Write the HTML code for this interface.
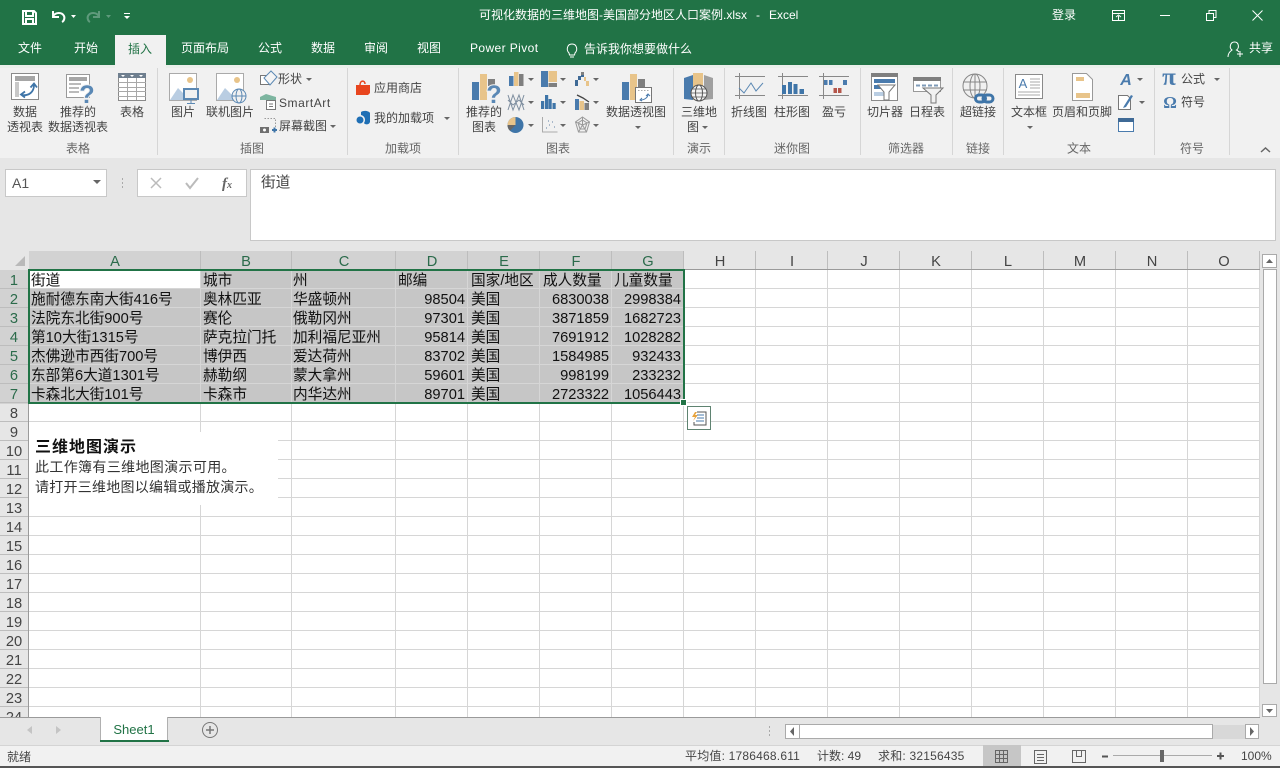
<!DOCTYPE html>
<html lang="zh-CN"><head><meta charset="utf-8"><title>Excel</title>
<style>
html,body{margin:0;padding:0;width:1280px;height:768px;overflow:hidden;background:#e6e6e6}
svg{display:block;position:absolute;left:0;top:0}
text{font-family:"Liberation Sans","Noto Sans CJK SC",sans-serif;font-size:12px;fill:#444}
.w text{fill:#fff}
.r text{fill:#444;text-anchor:middle}
.g text{fill:#666;text-anchor:middle}
.c text{font-size:14.67px;fill:#111}
.n text{font-size:14.67px;fill:#111;text-anchor:end}
.h text{font-size:14.67px;text-anchor:middle;fill:#444}
.hs text{font-size:14.67px;text-anchor:middle;fill:#2b6b4b}
</style></head><body>
<svg width="1280" height="768" viewBox="0 0 1280 768" xmlns="http://www.w3.org/2000/svg">
<defs><path id="a" d="M0 0h6l-3 3z" fill="#666"/></defs>
<!-- title -->
<rect width="1280" height="65" fill="#217346"/>
<rect x="115" y="35" width="51" height="31" fill="#f1f1f1"/>
<rect y="65" width="1280" height="93" fill="#f1f1f1"/>
<rect y="65" x="0" width="115" height="3" fill="#e9efea"/><rect y="65" x="166" width="1114" height="3" fill="#e9efea"/>
<path d="M23 11h11l2 2v11H23z M26 11v5h7v-5 M26 24v-5h7v5" fill="none" stroke="#fff" stroke-width="2"/>
<path d="M53 11v6h6 M53 16c3-4 9-4 11 0 1 2 0 5-2 6" fill="none" stroke="#fff" stroke-width="2"/>
<path d="M71 15h5l-2.500 3z" fill="#fff"/>
<path d="M99 11v6h-6 M99 16c-3-4-9-4-11 0-1 2 0 5 2 6" fill="none" stroke="#5f9a7c" stroke-width="2"/>
<path d="M106 15h5l-2.500 3z" fill="#5f9a7c"/>
<path d="M124 13h6v1h-6z M124 16h6l-3 3z" fill="#fff"/>
<g class="w">
<text x="479" y="19">可视化数据的三维地图-美国部分地区人口案例.xlsx</text>
<text x="756" y="19">-</text>
<text x="769" y="19">Excel</text>
<text x="1052" y="19">登录</text>
<text x="18" y="52">文件</text><text x="74" y="52">开始</text>
<text x="181" y="52">页面布局</text><text x="258" y="52">公式</text><text x="311" y="52">数据</text><text x="364" y="52">审阅</text><text x="417" y="52">视图</text>
<text x="470" y="52" style="letter-spacing:.4px">Power Pivot</text>
<text x="584" y="53">告诉我你想要做什么</text>
<text x="1249" y="52">共享</text>
</g>
<text x="128" y="53" style="fill:#217346">插入</text>
<path d="M1112.500 10.500h12v10h-12z M1112 13.500h13 M1118.500 20v-4 M1116 17l2.500-2 2.500 2" fill="none" stroke="#fff"/>
<path d="M1160 15.500h10" stroke="#fff"/>
<path d="M1206.500 13.500h7v7h-7z M1209 13v-2.500h7v7h-2.500" fill="none" stroke="#fff"/>
<path d="M1252.500 10.500l10 10 M1262.500 10.500l-10 10" stroke="#fff" fill="none"/>
<path d="M569 53c-3-3-2-9 3-9s6 6 3 9l-.5 2h-5z M570 57h4" fill="none" stroke="#fff"/>
<path d="M1228 57c0-5 3-6 4-7-3-2-2-8 2.500-8s5 6 2 8c1 .5 2 1 2.500 2 M1237 54h6 M1240 51v6" fill="none" stroke="#fff"/>
<!-- separators -->
<path d="M157.500 68v87M347.500 68v87M458.500 68v87M673.500 68v87M724.500 68v87M860.500 68v87M952.500 68v87M1003.500 68v87M1154.500 68v87M1229.500 68v87" stroke="#d6d6d6"/>
<!-- ribbon labels -->
<g class="r">
<text x="25" y="116">数据</text><text x="25" y="131">透视表</text>
<text x="78" y="116">推荐的</text><text x="78" y="131">数据透视表</text>
<text x="132" y="116">表格</text><text x="183" y="116">图片</text><text x="230" y="116">联机图片</text>
<text x="484" y="116">推荐的</text><text x="484" y="131">图表</text>
<text x="636" y="116">数据透视图</text>
<text x="699" y="116">三维地</text><text x="693" y="131">图</text>
<text x="749" y="116">折线图</text><text x="792" y="116">柱形图</text><text x="834" y="116">盈亏</text>
<text x="885" y="116">切片器</text><text x="927" y="116">日程表</text><text x="978" y="116">超链接</text>
<text x="1029" y="116">文本框</text><text x="1082" y="116">页眉和页脚</text>
</g>
<text x="278" y="83">形状</text><text x="279" y="107" style="letter-spacing:.55px">SmartArt</text><text x="279" y="130">屏幕截图</text>
<text x="374" y="92">应用商店</text><text x="374" y="122">我的加载项</text>
<text x="1181" y="83">公式</text><text x="1181" y="106">符号</text>
<g class="g">
<text x="78" y="152.500">表格</text><text x="252" y="152.500">插图</text><text x="403" y="152.500">加载项</text><text x="558" y="152.500">图表</text><text x="699" y="152.500">演示</text><text x="792" y="152.500">迷你图</text><text x="906" y="152.500">筛选器</text><text x="978" y="152.500">链接</text><text x="1079" y="152.500">文本</text><text x="1192" y="152.500">符号</text>
</g>
<!-- arrows -->
<use href="#a" x="306" y="78"/><use href="#a" x="330" y="125"/><use href="#a" x="444" y="117"/>
<use href="#a" x="528" y="78"/><use href="#a" x="560" y="78"/><use href="#a" x="593" y="78"/>
<use href="#a" x="528" y="101"/><use href="#a" x="560" y="101"/><use href="#a" x="593" y="101"/>
<use href="#a" x="528" y="124"/><use href="#a" x="560" y="124"/><use href="#a" x="593" y="124"/>
<use href="#a" x="635" y="126"/><use href="#a" x="702" y="126"/><use href="#a" x="1027" y="126"/>
<use href="#a" x="1137" y="78"/><use href="#a" x="1139" y="101"/><use href="#a" x="1214" y="78"/>
<!-- pivot table -->
<rect x="11.500" y="73.500" width="27" height="26" fill="#fff" stroke="#8a8a8a"/><rect x="15" y="76" width="20" height="5" fill="#a6a6a6"/><rect x="15" y="82" width="4" height="15" fill="#c8c8c8"/>
<path d="M22 95c7 1 12-3 12-10 M30.500 87.500l3.500-4 3 4 M25 91.500l-4 3 4 3" fill="none" stroke="#3f75a8" stroke-width="1.800"/>
<!-- recommended pivot -->
<rect x="66.500" y="74.500" width="23" height="23" fill="#fff" stroke="#999"/><rect x="69" y="77" width="18" height="4" fill="#a6a6a6"/><path d="M69 84h12M69 88h10M69 92h10" stroke="#bbb" stroke-width="2"/>
<text x="87" y="103" style="font-size:25px;font-weight:bold;fill:#5a88b5;text-anchor:middle;paint-order:stroke;stroke:#f1f1f1;stroke-width:2px">?</text>
<!-- table -->
<rect x="118.500" y="73.500" width="27" height="27" fill="#fff" stroke="#8a8a8a"/><rect x="118" y="73" width="28" height="5" fill="#6f7f8f"/>
<path d="M121 75h4l-2 2zM130 75h4l-2 2zM139 75h4l-2 2z" fill="#fff"/>
<path d="M118 82.500h28M118 87.500h28M118 91.500h28M118 96.500h28M127.500 78v22M136.500 78v22" stroke="#a8a8a8"/>
<!-- picture -->
<rect x="169.500" y="73.500" width="27" height="27" fill="#fff" stroke="#aaa"/><circle cx="190" cy="80" r="3" fill="#e8c48a"/><path d="M170 100l8-12 7 7 2 5z" fill="#b9cde2"/>
<rect x="184" y="89" width="14" height="10" fill="#f1f1f1" stroke="#5b88b3" stroke-width="2"/><path d="M191 100v3M187 103.500h8" stroke="#5b88b3"/>
<!-- online picture -->
<rect x="216.500" y="73.500" width="27" height="27" fill="#fff" stroke="#aaa"/><circle cx="237" cy="80" r="3" fill="#e8c48a"/><path d="M217 100l8-12 7 7 2 5z" fill="#b9cde2"/>
<circle cx="239" cy="96" r="7" fill="#f1f1f1" stroke="#5b88b3"/><ellipse cx="239" cy="96" rx="3" ry="7" fill="none" stroke="#5b88b3"/><path d="M232 96h14" stroke="#5b88b3"/>
<!-- shapes -->
<rect x="260.500" y="75.500" width="9" height="9" fill="#fff" stroke="#777"/><path d="M271 71l6 6-7 8-6-7z" fill="#f4f4f4" stroke="#5b88b3"/>
<path d="M260 97l6-3 10 3v3h-16z" fill="#7db5a0"/><rect x="266.500" y="100.500" width="9" height="9" fill="#fff" stroke="#777"/><path d="M269 104h4M269 106.500h4" stroke="#777"/>
<path d="M264.500 118.500h11v9" fill="none" stroke="#999" stroke-dasharray="1.500 1.500"/><rect x="260" y="127" width="9" height="6" fill="#6f6f6f"/><circle cx="264.500" cy="130" r="1.500" fill="#fff"/><path d="M272 130h5M274.500 127.500v5" stroke="#3f75a8" stroke-width="2"/>
<!-- store & addin -->
<path d="M356 85h14v8l-2 2h-12z" fill="#e8451e"/><path d="M360 85c0-5 5-5 5-1" fill="none" stroke="#e8451e" stroke-width="1.500"/>
<circle cx="360" cy="120" r="3.500" fill="#1f6fb5"/><path d="M361 112c3-2 8-1 9 1v9c-1 3-5 3-6 1 2-3 1-7-3-8z" fill="#1f6fb5"/>
<!-- recommended charts -->
<rect x="472" y="82" width="7" height="18" fill="#4a7bad"/><rect x="480" y="74" width="7" height="26" fill="#e8c48a"/><rect x="488" y="79" width="7" height="7" fill="#7f7f7f"/>
<text x="494" y="103" style="font-size:25px;font-weight:bold;fill:#5a88b5;text-anchor:middle;paint-order:stroke;stroke:#f1f1f1;stroke-width:2px">?</text>
<!-- small charts -->
<rect x="509" y="76" width="4.500" height="10" fill="#4a7bad"/><rect x="514" y="72" width="4.500" height="14" fill="#e8c48a"/><rect x="519" y="74" width="4.500" height="12" fill="#7f7f7f"/>
<rect x="541" y="71" width="7" height="16" fill="#4a7bad"/><rect x="548.500" y="71" width="8.500" height="11" fill="#e8c48a"/><rect x="548.500" y="83" width="8.500" height="4" fill="#7f7f7f"/>
<path d="M575 86v-6h3v-4h3v-4h3v5h-3v3h-3v6z" fill="#3f6a96"/><path d="M584 77h2v4h3v5h-3v-5h-2z" fill="#e8c48a"/><rect x="581" y="72" width="3" height="3" fill="#7f7f7f"/>
<path d="M508 95l5 15 6-15 5 15M508 110l5-15 6 15 5-15M508 100l5 5 6-5 5 5" fill="none" stroke="#7f8fa0"/>
<rect x="541" y="101" width="3.200" height="8" fill="#3f75a8"/><rect x="545" y="95" width="3.200" height="14" fill="#3f75a8"/><rect x="548.500" y="99" width="3.200" height="10" fill="#3f75a8"/><rect x="552.500" y="103" width="3.200" height="6" fill="#3f75a8"/>
<rect x="575" y="99" width="4" height="11" fill="#4a7bad"/><rect x="579.500" y="101" width="4.500" height="9" fill="#e8c48a"/><rect x="584.500" y="103" width="4.500" height="7" fill="#7f7f7f"/><path d="M577 95l6 3 6 4" stroke="#444" fill="none" stroke-width="1.300"/>
<circle cx="515.500" cy="125" r="8" fill="#3f75a8"/><path d="M515.500 125v-8a8 8 0 0 0-8 8z" fill="#e8c48a"/><path d="M515.500 125h-8a8 8 0 0 0 2.500 5.800z" fill="#666"/>
<path d="M542.500 117v15h15" fill="none" stroke="#aaa"/><path d="M546 128h1M549 125h1M552 122h1M548 121h1M554 127h1" stroke="#8fa6bd" stroke-width="1.500"/>
<path d="M582.500 117l7 5-3 10h-8l-3-10z M582.500 117v8M589.500 122l-7 3M586.500 132l-4-7M578.500 132l4-7M575.500 122l7 3 M582.500 120l4.500 3-2 6h-5l-2-6z" fill="none" stroke="#999"/>
<!-- pivot chart -->
<rect x="622" y="82" width="7" height="18" fill="#4a7bad"/><rect x="630" y="74" width="7" height="26" fill="#e8c48a"/><rect x="638" y="79" width="7" height="8" fill="#7f7f7f"/>
<rect x="635.500" y="87.500" width="16" height="15" fill="#fff" stroke="#777"/><path d="M638 90.500h11" stroke="#aaa" stroke-dasharray="1.500 1.500"/><path d="M640 100c4 0 8-2 8-6M646 96l2-2 2 2M642 98l-2 2 2 1" fill="none" stroke="#4a7bad"/>
<!-- 3d map -->
<path d="M684 78l9-3v25l-9-1z" fill="#4a7bad"/><path d="M693 73h10v27h-10z" fill="#e8c48a"/><path d="M704 75l9 3v21l-9 1z" fill="#a0a0a0"/>
<circle cx="699" cy="93" r="8" fill="#f4f4f4" stroke="#555"/><ellipse cx="699" cy="93" rx="3.500" ry="8" fill="none" stroke="#555"/><path d="M691 93h16M692 89h14M692 97h14" stroke="#555" stroke-width=".8"/>
<!-- sparklines -->
<path d="M735 76.500h30M735 95.500h30M739.500 73v26M778 76.500h30M778 95.500h30M782.500 73v26M819 76.500h30M819 95.500h30M823.500 73v26" stroke="#888" fill="none"/>
<path d="M739 88l5 5 7-10 5 8 7-8" fill="none" stroke="#5b88b3"/>
<rect x="782" y="85" width="4" height="9" fill="#3f75a8"/><rect x="788" y="82" width="4" height="12" fill="#3f75a8"/><rect x="793.500" y="84" width="4" height="10" fill="#3f75a8"/><rect x="799.500" y="89" width="4.500" height="5" fill="#3f75a8"/>
<rect x="824" y="80" width="3.500" height="5" fill="#4a7bad"/><rect x="829" y="80" width="3.500" height="5" fill="#4a7bad"/><rect x="833.500" y="88" width="3.500" height="5" fill="#b5564a"/><rect x="838" y="88" width="3.500" height="5" fill="#b5564a"/><rect x="843" y="80" width="4" height="5" fill="#4a7bad"/>
<!-- slicer -->
<rect x="871.500" y="74.500" width="26" height="26" fill="#fff" stroke="#8a8a8a"/><rect x="871" y="73" width="27" height="4" fill="#7f7f7f"/><rect x="874" y="79" width="21" height="4" fill="#4a7bad"/><rect x="874" y="85" width="10" height="4" fill="#4a7bad"/><rect x="874" y="92" width="11" height="4" fill="#b9cde2"/>
<path d="M878 85h17l-6 7v8h-5v-8z" fill="#fff" stroke="#777"/>
<!-- timeline -->
<rect x="913.500" y="77.500" width="27" height="14" fill="#fff" stroke="#999"/><rect x="913" y="77" width="28" height="4" fill="#7f7f7f"/><path d="M916 85.500h4M922 85.500h4M928 85.500h4M934 85.500h4" stroke="#7f9bb8" stroke-width="2"/>
<path d="M923 88h20l-7 7v8h-5v-8z" fill="#f1f1f1" stroke="#777"/>
<!-- hyperlink -->
<circle cx="975" cy="86" r="12" fill="none" stroke="#888"/><ellipse cx="975" cy="86" rx="5" ry="12" fill="none" stroke="#888"/><path d="M963 82h24M963 90h24M975 74v24" stroke="#888"/>
<rect x="975.500" y="95" width="10" height="7" rx="3.500" fill="#f1f1f1" stroke="#3f75a8" stroke-width="3"/><rect x="983" y="95" width="10" height="7" rx="3.500" fill="none" stroke="#3f75a8" stroke-width="3"/>
<!-- textbox -->
<rect x="1015.500" y="74.500" width="27" height="24" fill="#fff" stroke="#8a8a8a"/><text x="1023" y="88" style="font-size:13px;fill:#4a7bad;text-anchor:middle">A</text><path d="M1030 79h10M1030 82h10M1030 85h10M1030 88h10M1018 92h22M1018 95h22" stroke="#aaa"/>
<!-- header footer -->
<path d="M1072.500 73.500h14l6 6v21h-20z" fill="#fff" stroke="#999"/><rect x="1076" y="77" width="8" height="4" fill="#e8c48a"/><rect x="1076" y="93" width="14" height="5" fill="#e8c48a"/>
<!-- wordart etc -->
<text x="1126" y="85" style="font-size:16px;font-weight:bold;font-style:italic;fill:#4a7bad;text-anchor:middle">A</text>
<path d="M1118.500 95.500h9l3 3v11h-12z" fill="#fff" stroke="#777"/><path d="M1124 106l7-11 2 1-7 11-3 1z" fill="#4a7bad"/>
<rect x="1118.500" y="118.500" width="15" height="13" fill="#fff" stroke="#4a7bad"/><rect x="1118" y="118" width="16" height="4" fill="#3f6a96"/>
<text x="1169" y="85" style="font-size:25px;font-weight:bold;fill:#4a7bad;text-anchor:middle;font-family:'Liberation Serif',serif">π</text>
<text x="1170" y="108" style="font-size:17px;font-weight:bold;fill:#4a7bad;text-anchor:middle;font-family:'Liberation Serif',serif">Ω</text>
<path d="M1261 152l4.500-4 4.500 4" fill="none" stroke="#666" stroke-width="1.500"/>
<!-- formula bar -->
<rect y="158" width="1280" height="93" fill="#e6e6e6"/>
<rect x="5.500" y="169.500" width="101" height="27" fill="#fff" stroke="#c8c8c8"/>
<text x="12" y="188" style="font-size:14px;fill:#555">A1</text><path d="M93 180h8l-4 4z" fill="#666"/>
<path d="M122.500 178v2M122.500 182v2M122.500 186v2" stroke="#aaa"/>
<rect x="137.500" y="169.500" width="109" height="27" fill="#fff" stroke="#c8c8c8"/>
<path d="M151 178l10 10M161 178l-10 10" stroke="#bbb" stroke-width="1.500"/><path d="M186 183l4 5 8-10" fill="none" stroke="#bbb" stroke-width="2"/>
<text x="222" y="188" style="font-size:15px;font-style:italic;font-weight:bold;fill:#666;font-family:'Liberation Serif',serif">f<tspan font-size="10">x</tspan></text>
<rect x="250.500" y="169.500" width="1025" height="71" fill="#fff" stroke="#c8c8c8"/>
<text x="261" y="187" style="font-size:14.67px">街道</text>
<!-- sheet -->
<rect x="29" y="270" width="1231" height="447" fill="#fff"/>
<rect x="0" y="251" width="1260" height="18" fill="#e6e6e6"/><rect x="29" y="251" width="655" height="18" fill="#d2d2d2"/>
<rect x="0" y="270" width="28" height="134" fill="#d2d2d2"/>
<path d="M25 256v10h-10z" fill="#b9b9b9"/>
<rect x="29" y="270" width="655" height="133" fill="#c6c6c6"/><rect x="30" y="271" width="170" height="18" fill="#fff"/>
<path d="M200.500 270v447M291.500 270v447M395.500 270v447M467.500 270v447M539.500 270v447M611.500 270v447M683.500 270v447M755.500 270v447M827.500 270v447M899.500 270v447M971.500 270v447M1043.500 270v447M1115.500 270v447M1187.500 270v447M1259.500 270v447M29 288.500h1231M29 307.500h1231M29 326.500h1231M29 345.500h1231M29 364.500h1231M29 383.500h1231M29 402.500h1231M29 421.500h1231M29 440.500h1231M29 459.500h1231M29 478.500h1231M29 497.500h1231M29 516.500h1231M29 535.500h1231M29 554.500h1231M29 573.500h1231M29 592.500h1231M29 611.500h1231M29 630.500h1231M29 649.500h1231M29 668.500h1231M29 687.500h1231M29 706.500h1231" stroke="#d6d6d6"/>
<path d="M200.500 251v18M291.500 251v18M395.500 251v18M467.500 251v18M539.500 251v18M611.500 251v18M683.500 251v18M755.500 251v18M827.500 251v18M899.500 251v18M971.500 251v18M1043.500 251v18M1115.500 251v18M1187.500 251v18M1259.500 251v18M0 288.500h28M0 307.500h28M0 326.500h28M0 345.500h28M0 364.500h28M0 383.500h28M0 402.500h28M0 421.500h28M0 440.500h28M0 459.500h28M0 478.500h28M0 497.500h28M0 516.500h28M0 535.500h28M0 554.500h28M0 573.500h28M0 592.500h28M0 611.500h28M0 630.500h28M0 649.500h28M0 668.500h28M0 687.500h28M0 706.500h28" stroke="#bdbdbd"/>
<path d="M684 269.500h576" stroke="#9a9a9a"/><path d="M28.500 404v313" stroke="#9a9a9a"/>
<g class="hs">
<text x="115" y="266">A</text><text x="246" y="266">B</text><text x="344" y="266">C</text><text x="432" y="266">D</text><text x="504" y="266">E</text><text x="576" y="266">F</text><text x="648" y="266">G</text>
<text x="14" y="285">1</text><text x="14" y="304">2</text><text x="14" y="323">3</text><text x="14" y="342">4</text><text x="14" y="361">5</text><text x="14" y="380">6</text><text x="14" y="399">7</text>
</g>
<g class="h">
<text x="720" y="266">H</text><text x="792" y="266">I</text><text x="864" y="266">J</text><text x="936" y="266">K</text><text x="1008" y="266">L</text><text x="1080" y="266">M</text><text x="1152" y="266">N</text><text x="1224" y="266">O</text>
<text x="14" y="418">8</text><text x="14" y="437">9</text><text x="14" y="456">10</text><text x="14" y="475">11</text><text x="14" y="494">12</text><text x="14" y="513">13</text><text x="14" y="532">14</text><text x="14" y="551">15</text><text x="14" y="570">16</text><text x="14" y="589">17</text><text x="14" y="608">18</text><text x="14" y="627">19</text><text x="14" y="646">20</text><text x="14" y="665">21</text><text x="14" y="684">22</text><text x="14" y="703">23</text><text x="14" y="722">24</text>
</g>
<g class="c">
<text x="31" y="285">街道</text><text x="203" y="285">城市</text><text x="293" y="285">州</text><text x="398" y="285">邮编</text><text x="471" y="285">国家/地区</text><text x="543" y="285">成人数量</text><text x="614" y="285">儿童数量</text>
<text x="31" y="304">施耐德东南大街416号</text><text x="203" y="304">奥林匹亚</text><text x="293" y="304">华盛顿州</text><text x="471" y="304">美国</text>
<text x="31" y="323">法院东北街900号</text><text x="203" y="323">赛伦</text><text x="293" y="323">俄勒冈州</text><text x="471" y="323">美国</text>
<text x="31" y="342">第10大街1315号</text><text x="203" y="342">萨克拉门托</text><text x="293" y="342">加利福尼亚州</text><text x="471" y="342">美国</text>
<text x="31" y="361">杰佛逊市西街700号</text><text x="203" y="361">博伊西</text><text x="293" y="361">爱达荷州</text><text x="471" y="361">美国</text>
<text x="31" y="380">东部第6大道1301号</text><text x="203" y="380">赫勒纲</text><text x="293" y="380">蒙大拿州</text><text x="471" y="380">美国</text>
<text x="31" y="399">卡森北大街101号</text><text x="203" y="399">卡森市</text><text x="293" y="399">内华达州</text><text x="471" y="399">美国</text>
</g>
<g class="n">
<text x="465" y="304">98504</text><text x="609" y="304">6830038</text><text x="681" y="304">2998384</text>
<text x="465" y="323">97301</text><text x="609" y="323">3871859</text><text x="681" y="323">1682723</text>
<text x="465" y="342">95814</text><text x="609" y="342">7691912</text><text x="681" y="342">1028282</text>
<text x="465" y="361">83702</text><text x="609" y="361">1584985</text><text x="681" y="361">932433</text>
<text x="465" y="380">59601</text><text x="609" y="380">998199</text><text x="681" y="380">233232</text>
<text x="465" y="399">89701</text><text x="609" y="399">2723322</text><text x="681" y="399">1056443</text>
</g>
<rect x="29" y="270" width="655" height="133" fill="none" stroke="#217346" stroke-width="2"/>
<rect x="680" y="399" width="7" height="7" fill="#fff"/><rect x="681" y="400" width="5" height="5" fill="#217346"/>
<rect x="687.500" y="406.500" width="23" height="23" fill="#fff" stroke="#5f8371"/>
<path d="M695 412l-3 5h3l-2 4 5-6h-3l2-3z" fill="#e8a33d"/><path d="M697 412h9v13h-12v-3" fill="none" stroke="#555"/><path d="M697 415h7M697 418h7M696 421h8" stroke="#4a7bad"/>
<!-- 3D map note -->
<rect x="29" y="432" width="249" height="73" fill="#fff"/>
<text x="35" y="452" style="font-size:16px;font-weight:bold;fill:#111;letter-spacing:1px">三维地图演示</text>
<text x="35" y="472" style="font-size:14px;fill:#333;letter-spacing:.35px">此工作簿有三维地图演示可用。</text>
<text x="35" y="492" style="font-size:14px;fill:#333;letter-spacing:.25px">请打开三维地图以编辑或播放演示。</text>
<!-- v scrollbar -->
<rect x="1260" y="251" width="20" height="466" fill="#e6e6e6"/>
<rect x="1262.500" y="254.500" width="14" height="13" fill="#fff" stroke="#aaa"/><path d="M1266 263h7l-3.500-4z" fill="#666"/>
<rect x="1263.500" y="269.500" width="13" height="414" fill="#fff" stroke="#aaa"/>
<rect x="1262.500" y="704.500" width="14" height="12" fill="#fff" stroke="#aaa"/><path d="M1266 709h7l-3.500 4z" fill="#666"/>
<!-- tab bar -->
<rect y="717" width="1280" height="28" fill="#e6e6e6"/>
<path d="M0 717.500h1260" stroke="#9a9a9a"/>
<path d="M32 726v8l-5-4zM56 726v8l5-4z" fill="#c4c4c4"/>
<rect x="100" y="717" width="68" height="25" fill="#fff"/><path d="M100.500 717v25M167.500 717v25" stroke="#b0b0b0"/><rect x="100" y="740" width="69" height="2" fill="#217346"/>
<text x="134" y="734" style="font-size:13px;fill:#217346;text-anchor:middle">Sheet1</text>
<circle cx="210" cy="730" r="7.500" fill="none" stroke="#777"/><path d="M206 730h8M210 726v8" stroke="#777" stroke-width="1.500"/>
<path d="M769.500 726v2M769.500 730v2M769.500 734v2" stroke="#aaa"/>
<rect x="1212" y="725" width="33" height="14" fill="#d8d8d8"/>
<rect x="785.500" y="724.500" width="14" height="14" fill="#fff" stroke="#aaa"/><path d="M794 727v9l-4-4.500z" fill="#666"/>
<rect x="799.500" y="724.500" width="413" height="14" fill="#fff" stroke="#aaa"/>
<rect x="1245.500" y="724.500" width="13" height="14" fill="#fff" stroke="#aaa"/><path d="M1250 727v9l4-4.500z" fill="#666"/>
<!-- status bar -->
<rect y="745" width="1280" height="21" fill="#f1f1f1"/><path d="M0 745.500h1280" stroke="#d4d4d4"/>
<rect y="766" width="1280" height="2" fill="#555"/>
<text x="7" y="761">就绪</text>
<text x="685" y="760" style="letter-spacing:.2px">平均值: 1786468.611</text><text x="817" y="760">计数: 49</text><text x="878" y="760" style="letter-spacing:.2px">求和: 32156435</text>
<rect x="983" y="745" width="38" height="21" fill="#c6c6c6"/>
<path d="M995.500 750.500h12v12h-12zM999.500 750.500v12M1003.500 750.500v12M995.500 754.500h12M995.500 758.500h12" fill="none" stroke="#666"/>
<path d="M1034.500 750.500h12v13h-12zM1037 754.500h7M1037 757.500h7M1037 760.500h7" fill="none" stroke="#666"/>
<path d="M1072.500 750.500h13v12h-13zM1076.500 750.500v6h5v-6" fill="none" stroke="#666"/>
<path d="M1102 756.500h6" stroke="#555" stroke-width="2"/><path d="M1113 755.500h99" stroke="#aaa"/><rect x="1160" y="750" width="4" height="12" fill="#666"/><path d="M1217 756h7M1220.500 752.500v7" stroke="#555" stroke-width="2"/>
<text x="1241" y="760">100%</text>
</svg>
</body></html>
